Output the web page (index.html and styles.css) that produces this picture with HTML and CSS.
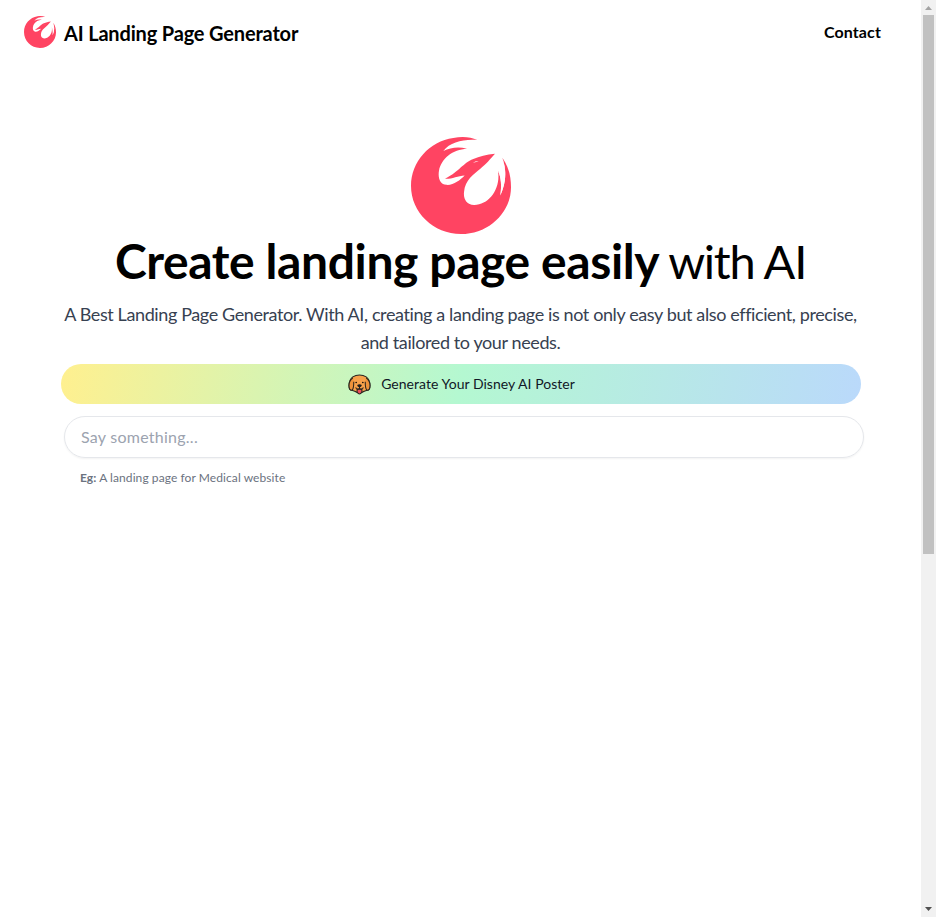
FILE: index.html
```html
<!DOCTYPE html>
<html lang="en">
<head>
<meta charset="utf-8">
<title>AI Landing Page Generator</title>
<link rel="stylesheet" href="styles.css">
</head>
<body>
<svg class="defs" aria-hidden="true">
  <symbol id="phoenix" viewBox="33 22 300 290" preserveAspectRatio="none">
    <path fill="#ff4462" d="M232 31C212 22 187 20 160 25C88 35 33 96 33 168C33 248 100 312 183 312C266 312 333 248 333 172C333 142 327 112 307 84C321 125 318 158 301 197C305 168 304 145 294 123C303 177 266 226 222 225C200 224 190 208 192 187C195 150 222 133 241 117C260 101 270 89 285 72C259 74 238 80 220 88C187 101 180 124 135 147C156 148 173 138 194 137C180 151 160 167 139 165C121 163 113 145 117 123C123 87 158 59 201 57C174 50 151 54 130 64C151 37 190 28 232 31Z"/>
    <path fill="#fff" d="M219 99Q227 93 236 94Q229 98 219 99ZM294 123C304 145 305 168 301 197C318 158 321 125 307 84C316 120 314 138 308 158C306 145 302 132 294 123Z"/>
  </symbol>
</svg>
<div class="window">
  <div class="page">
    <header class="header">
      <a class="brand"><svg class="brand-logo"><use href="#phoenix"/></svg><span class="brand-name">AI Landing Page Generator</span></a>
      <a class="contact">Contact</a>
    </header>
    <main class="hero">
      <svg class="hero-logo"><use href="#phoenix"/></svg>
      <h1 class="title"><b>Create landing page easily</b> <span>with AI</span></h1>
      <p class="intro">A Best Landing Page Generator. With AI, creating a landing page is not only easy but also efficient, precise,<br>and tailored to your needs.</p>
      <a class="promo">
        <svg class="dog" viewBox="0 0 24 22">
          <g stroke="#28251f" stroke-width="1.1" stroke-linejoin="round">
            <path fill="#f7a14a" d="M5 3Q8 1 12 1T19 3Q23 6 23 12Q23 17 20 17L17 18Q12 21 7 18L4 17Q1 17 1 12Q1 6 5 3Z"/>
            <path fill="#ed923b" d="M5 4Q1 7 1 12Q1 17 4 17Q6 16 6 8M19 4Q23 7 23 12Q23 17 20 17Q18 16 18 8"/>
            <path fill="#ef4e5b" d="M9.5 16H14.5V19Q12 23 9.5 19Z"/>
            <path fill="none" d="M8 14Q9 17 12 15Q15 17 16 14M12 13V15"/>
          </g>
          <path fill="#211f1c" d="M9.5 11.5Q12 10 14.5 11.5Q14 14 12 14T9.5 11.5Z"/>
          <circle cx="8.5" cy="9" r=".8"/><circle cx="15.5" cy="9" r=".8"/>
        </svg>
        <span class="promo-text">Generate Your Disney AI Poster</span>
      </a>
      <div class="prompt"><span>Say something...</span></div>
      <p class="example"><b>Eg:</b> A landing page for Medical website</p>
    </main>
  </div>
  <div class="scrollbar">
    <svg class="arrow" viewBox="0 0 15 15"><path fill="#a3a3a3" d="M4 10H11L7.5 6Z"/></svg>
    <div class="thumb"></div>
    <svg class="arrow arrow-down" viewBox="0 0 15 15"><path fill="#505050" d="M4 5H11L7.5 9Z"/></svg>
  </div>
</div>
</body>
</html>
```
FILE: styles.css
```css
* { box-sizing: border-box; }
body { margin: 0; background: #fff; color: #000; font-family: Lato, "Noto Sans", sans-serif; }
.defs { display: none; }
.window { display: grid; grid-template-columns: 921px 15px; height: 917px; overflow: hidden; }
.header { display: flex; align-items: center; justify-content: space-between; height: 64px; padding: 0 40px 0 24px; }
.brand { display: flex; align-items: center; gap: 8px; font-size: 20px; font-weight: 700; white-space: nowrap; }
.brand-logo { width: 32px; height: 32px; }
.brand-name { padding-top: 1px; line-height: 28px; letter-spacing: -0.17px; }
.contact { padding-bottom: 2px; font-size: 16px; font-weight: 700; letter-spacing: 0.12px; }
.hero { display: flex; flex-direction: column; align-items: center; padding-top: 73px; }
.hero-logo { width: 100px; height: 97px; flex: none; }
.title { margin: 3px 0 0; font-size: 48px; line-height: 48px; font-weight: 400; letter-spacing: -0.4px; white-space: nowrap; }
.title b { font-weight: 700; }
.title span { margin-left: -3px; font-size: 47px; letter-spacing: -1.25px; }
.intro { margin: 15px 0 0; font-size: 18px; line-height: 28px; color: #374151; text-align: center; white-space: nowrap; letter-spacing: -0.39px; }
.promo { display: flex; align-items: center; justify-content: center; gap: 10px; width: 800px; height: 40px; margin-top: 8px; padding-left: 2px; border-radius: 20px; background: linear-gradient(100deg, #fff08f, #b4f8d1 50%, #bad9fb); }
.dog { width: 23px; height: 21px; }
.promo-text { padding-bottom: 1px; font-size: 14px; color: #111827; letter-spacing: 0.03px; }
.prompt { display: flex; align-items: center; width: 800px; height: 42px; margin: 12px 0 0 7px; padding: 0 16px 1px; border: 1px solid #e5e7eb; border-radius: 21px; box-shadow: 0 1px 2px #0000000d; font-size: 16px; color: #9ca3af; letter-spacing: 0.25px; }
.example { align-self: flex-start; margin: 12px 0 0 80px; font-size: 12px; line-height: 16px; color: #6b7280; letter-spacing: 0.08px; }
.scrollbar { display: flex; flex-direction: column; align-items: center; background: #f1f1f1; }
.arrow { width: 15px; height: 15px; flex: none; }
.arrow-down { margin-top: auto; }
.thumb { width: 11px; height: 539px; background: #c1c1c1; }
```
